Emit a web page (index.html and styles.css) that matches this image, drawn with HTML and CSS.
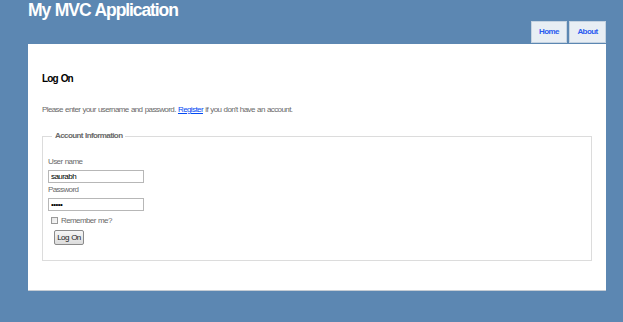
FILE: index.html
```html
<!DOCTYPE html>
<html lang="en">
<head>
    <meta charset="UTF-8">
    <title>Log On - My MVC Application</title>
    <link rel="stylesheet" href="styles.css">
</head>
<body>
    <div class="page">
        <div class="header">
            <h1 class="title">My MVC Application</h1>
            <ul class="menu">
                <li><a href="#">Home</a></li>
                <li><a href="#">About</a></li>
            </ul>
        </div>

        <div class="main">
            <h2>Log On</h2>
            <p class="intro">Please enter your username and password. <a href="#">Register</a> if you don't have an account.</p>

            <fieldset class="account">
                <legend>Account Information</legend>
                <div class="editor-label">User name</div>
                <div class="editor-field"><input type="text" value="saurabh"></div>
                <div class="editor-label">Password</div>
                <div class="editor-field"><input type="password" value="saura"></div>
                <div class="editor-check">
                    <input type="checkbox" id="rememberMe">
                    <label for="rememberMe">Remember me?</label>
                </div>
                <div class="actions">
                    <button type="button">Log On</button>
                </div>
            </fieldset>
        </div>
    </div>
</body>
</html>
```

FILE: styles.css
```css
* {
    margin: 0;
    padding: 0;
    box-sizing: border-box;
}

body {
    background: #5c87b2;
    font-family: "Liberation Sans", Arial, sans-serif;
    font-size: 8px;
    letter-spacing: -0.6px;
    word-spacing: 0.6px;
    color: #696969;
    overflow: hidden;
}

.page {
    width: 578px;
    margin-left: 28px;
}

.header {
    height: 44px;
    display: flex;
    justify-content: space-between;
    align-items: flex-end;
}

.title {
    align-self: flex-start;
    color: #fff;
    font-size: 17.5px;
    letter-spacing: -1.1px;
    word-spacing: 1px;
    line-height: 20px;
    font-weight: bold;
}

.menu {
    list-style: none;
    display: flex;
    gap: 2px;
    margin-bottom: 1px;
}

.menu li a {
    display: block;
    width: 36px;
    height: 22px;
    line-height: 20px;
    text-align: center;
    background: #e8eef4;
    border: 1px solid #c5d3e1;
    color: #2b5cf0;
    font-weight: bold;
    font-size: 8px;
    text-decoration: none;
}

.menu li:last-child a {
    width: 37px;
}

.main {
    background: #fff;
    height: 247px;
    padding: 29px 14px 0 14px;
    border-bottom: 1px solid #c5ccd4;
}

.main h2 {
    color: #000;
    font-size: 10px;
    letter-spacing: -0.9px;
    word-spacing: 1.2px;
    line-height: 12px;
    font-weight: bold;
}

.intro {
    margin-top: 19px;
    line-height: 12px;
}

.intro a {
    color: #034af3;
}

.account {
    margin-top: 15px;
    height: 130px;
    width: 550px;
    border: 1px solid #dcdcdc;
    padding: 13px 5px 0 5px;
}

.account legend {
    font-weight: bold;
    font-size: 8px;
    padding: 0 3px;
    margin-left: 4px;
    line-height: 10px;
}

.editor-label {
    line-height: 10px;
    margin-top: 2px;
}

.editor-label:first-of-type {
    margin-top: 3px;
}

.editor-field input {
    display: block;
    width: 96px;
    height: 13px;
    margin-top: 3px;
    border: 1px solid #b7b7b7;
    font-family: "Liberation Sans", Arial, sans-serif;
    font-size: 8px;
    letter-spacing: -0.55px;
    color: #000;
    padding: 0 2px;
    outline: none;
}

.editor-check {
    display: flex;
    align-items: center;
    gap: 3px;
    margin-top: 5px;
    padding-left: 3px;
}

.editor-check input {
    appearance: none;
    width: 7px;
    height: 7px;
    border: 1px solid #9a9a9a;
    background: linear-gradient(135deg, #e4e4e4, #fafafa);
}

.actions {
    margin-top: 5px;
    padding-left: 6px;
}

.actions button {
    width: 30px;
    height: 15px;
    font-family: "Liberation Sans", Arial, sans-serif;
    font-size: 8px;
    letter-spacing: -0.55px;
    word-spacing: 0.6px;
    color: #222;
    border: 1px solid #8a8a8a;
    border-radius: 2px;
    background: linear-gradient(#f6f6f6, #dcdcdc);
}
```
